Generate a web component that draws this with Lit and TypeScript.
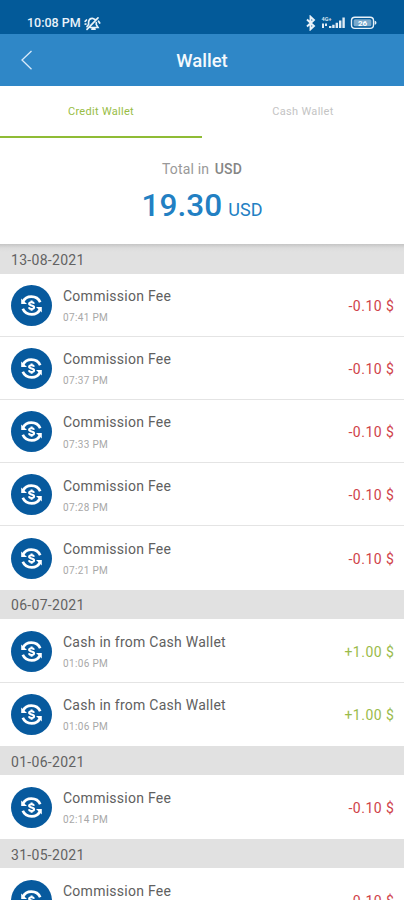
import { LitElement, html, css } from "lit";
import { customElement, property } from "lit/decorators.js";

interface Entry { title: string; time: string; amount: string; }
interface Group { date: string; entries: Entry[]; }

const fee = (time: string): Entry => ({ title: "Commission Fee", time, amount: "-0.10 $" });
const cashIn = (time: string): Entry => ({ title: "Cash in from Cash Wallet", time, amount: "+1.00 $" });

const groups: Group[] = [
  { date: "13-08-2021", entries: ["07:41 PM", "07:37 PM", "07:33 PM", "07:28 PM", "07:21 PM"].map(fee) },
  { date: "06-07-2021", entries: ["01:06 PM", "01:06 PM"].map(cashIn) },
  { date: "01-06-2021", entries: [fee("02:14 PM")] },
  { date: "31-05-2021", entries: [fee("02:10 PM")] },
];

@customElement("wallet-entry")
export class WalletEntry extends LitElement {
  @property({ attribute: false }) entry!: Entry;

  static styles = css`
    :host { display: flex; height: 63.2px; box-sizing: border-box; padding: 0 9.5px 0 11px; border-bottom: 1.5px solid #e4e4e4; background: #fff; }
    :host(.last) { border-bottom-color: transparent; }
    .icon { width: 41px; height: 41px; margin-top: 11.2px; flex: none; }
    .text { flex: 1; margin-left: 11px; white-space: nowrap; }
    .title { margin-top: 12.5px; font-size: 14px; line-height: 20px; letter-spacing: 0.26px; color: #606060; }
    .time { margin-top: 5.2px; font-size: 10px; line-height: 14px; letter-spacing: 0.34px; color: #a8a8a8; }
    .amount { margin-top: 22.3px; font-size: 14px; line-height: 20px; letter-spacing: 0.5px; color: #cf4249; white-space: nowrap; }
    .plus { color: #9abb4b; }
  `;

  render() {
    const e = this.entry;
    return html`
      <svg class="icon" viewBox="0 0 41 41">
        <circle cx="20.5" cy="20.5" r="20.5" fill="#075a9e" />
        <g fill="none" stroke="#fff" stroke-width="2.7">
          <path d="M12 16.6C13.6 13.2 16.6 11.6 20.3 11.6C24.5 11.6 27.8 13.8 29.2 17.2" />
          <path d="M29 24.4C27.4 27.8 24.4 29.4 20.7 29.4C16.5 29.4 13.2 27.2 11.8 23.8" />
        </g>
        <path d="M10.2 13.6V18.9H16Z M30.8 27.4V22.1H25Z" fill="#fff" />
        <g fill="none" stroke="#fff" stroke-width="2">
          <path d="M23 18.7C22.8 17.7 21.9 17.2 20.6 17.2C19.2 17.2 18.1 17.8 18.1 18.8C18.1 21.1 23.1 19.8 23.1 22.3C23.1 23.4 22.1 24 20.7 24C19.2 24 18.1 23.4 17.9 22.3" />
          <path d="M20.6 15.5V17.5M20.6 23.8V25.7" />
        </g>
      </svg>
      <div class="text">
        <div class="title">${e.title}</div>
        <div class="time">${e.time}</div>
      </div>
      <div class="amount ${e.amount.startsWith("+") ? "plus" : ""}">${e.amount}</div>
    `;
  }
}

@customElement("app-root")
export class AppRoot extends LitElement {
  static styles = css`
    :host { display: block; width: 404px; height: 900px; overflow: hidden; background: #fff; font-family: Roboto, "Liberation Sans", sans-serif; }
    .status { height: 34px; box-sizing: border-box; display: flex; align-items: center; padding: 12px 27px 0 27px; background: #035a99; color: #e9f2f9; }
    .clock { font-size: 12.5px; line-height: 20px; font-weight: 500; white-space: nowrap; }
    .mute { width: 17px; height: 15px; margin-left: 3px; }
    .signals { width: 72px; height: 16px; margin-left: auto; }
    .bar { height: 52px; display: grid; grid-template-columns: 52px 1fr 52px; align-items: center; background: #2f87c7; color: #f4f9fd; }
    .back { width: 14px; height: 22px; margin-left: 20px; }
    .heading { padding-top: 2px; text-align: center; font-size: 18.5px; font-weight: 500; line-height: 26px; }
    .tabs { display: flex; height: 52.2px; }
    .tab { flex: 1; box-sizing: border-box; padding-top: 18px; text-align: center; font-size: 11px; line-height: 16px; letter-spacing: 0.3px; color: #c4c4c4; }
    .active { color: #98bd45; border-bottom: 2.5px solid #8fbc35; }
    .total { height: 105.6px; box-sizing: border-box; padding-top: 21px; text-align: center; }
    .caption { font-size: 14px; line-height: 20px; letter-spacing: 0.15px; color: #999; }
    .caption b { font-weight: 500; color: #858585; margin-left: 2px; }
    .sum { margin-top: 7px; display: flex; justify-content: center; align-items: baseline; line-height: 40px; color: #2280c3; }
    .value { font-size: 31.5px; font-weight: 500; letter-spacing: 0.1px; }
    .unit { margin-left: 6px; font-size: 18px; }
    .date { height: 29.8px; box-sizing: border-box; padding: 5.9px 11px 0; background: #e1e1e1; font-size: 14px; line-height: 20px; letter-spacing: 0.3px; color: #636363; }
    .first { background: linear-gradient(#c5c5c5, #dcdcdc 4px, #e1e1e1 8px); }
  `;

  render() {
    return html`
      <div class="status">
        <span class="clock">10:08 PM</span>
        <svg class="mute" viewBox="0 0 17 15">
          <g fill="none" stroke="#e9f2f9" stroke-width="1.7" stroke-linecap="round">
            <path d="M3 10.5L4.6 8.5V6C5 3.5 7 2.3 9 2.5L11 3.6M6.5 11.5H14L12.3 8.6V6.5M8 13.2H11M3 13.3L14 1.8M1.2 5.3L2.5 4M14.5 5.2L15.7 7M1.2 8.1L2 8" />
          </g>
        </svg>
        <svg class="signals" viewBox="0 0 72 16">
          <path d="M2 4.5L9 11L5.5 14.3V1.7L9 5L2 11.5" fill="none" stroke="#e9f2f9" stroke-width="1.9" />
          <text x="16.5" y="6" font-size="5.5" font-weight="700" fill="#d4e4f0">4G+</text>
          <path d="M17 8.5H19V13H17ZM20 8.5H22V11H20ZM24 11H26.4V13H24ZM27.2 9.7H29.6V13H27.2ZM30.6 7.8H33V13H30.6ZM34 5.5H36.4V13H34ZM37.4 2.5H39.8V13H37.4Z" fill="#e0ecf5" />
          <rect x="46.5" y="2.2" width="22" height="11.2" rx="3.4" fill="none" stroke="#e9f2f9" stroke-width="1.4" />
          <rect x="48.6" y="4.3" width="17.8" height="7" rx="1.5" fill="#79a9cc" />
          <path d="M69.7 5.8C72 6.3 72 9.3 69.7 9.8Z" fill="#e9f2f9" />
          <text x="57.5" y="10.7" text-anchor="middle" font-size="8" font-weight="700" fill="#fff">26</text>
        </svg>
      </div>
      <div class="bar">
        <svg class="back" viewBox="0 0 14 22"><path d="M11.5 2L2 11L11.5 20.2" fill="none" stroke="#d8eafa" stroke-width="1.3" /></svg>
        <div class="heading">Wallet</div>
      </div>
      <div class="tabs">
        <div class="tab active">Credit Wallet</div>
        <div class="tab">Cash Wallet</div>
      </div>
      <div class="total">
        <div class="caption">Total in <b>USD</b></div>
        <div class="sum"><span class="value">19.30</span><span class="unit">USD</span></div>
      </div>
      ${groups.map((g, i) => html`
        <div class="date ${i === 0 ? "first" : ""}">${g.date}</div>
        ${g.entries.map((e, j) => html`<wallet-entry class=${j === g.entries.length - 1 ? "last" : ""} .entry=${e}></wallet-entry>`)}
      `)}
    `;
  }
}
